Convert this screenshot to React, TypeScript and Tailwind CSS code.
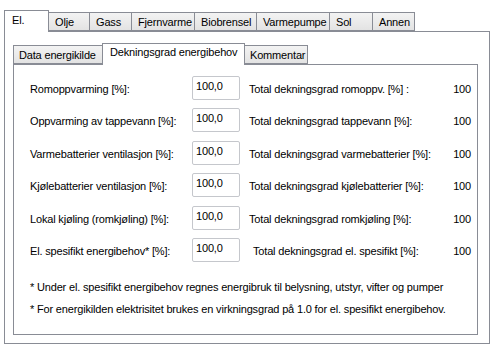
import React from 'react';

const outerTabs = ['El.', 'Olje', 'Gass', 'Fjernvarme', 'Biobrensel', 'Varmepumpe', 'Sol', 'Annen'];
const outerWidths = [45, 41, 42, 63, 62, 73, 43, 42];

const rows = [
  { label: 'Romoppvarming [%]:', total: 'Total dekningsgrad romoppv. [%] :', indent: false },
  { label: 'Oppvarming av tappevann [%]:', total: 'Total dekningsgrad tappevann [%]:', indent: false },
  { label: 'Varmebatterier ventilasjon [%]:', total: 'Total dekningsgrad varmebatterier [%]:', indent: false },
  { label: 'Kjølebatterier ventilasjon [%]:', total: 'Total dekningsgrad kjølebatterier [%]:', indent: false },
  { label: 'Lokal kjøling (romkjøling) [%]:', total: 'Total dekningsgrad romkjøling [%]:', indent: false },
  { label: 'El. spesifikt energibehov* [%]:', total: 'Total dekningsgrad el. spesifikt [%]:', indent: true },
];

export default function App() {
  return (
    <div
      className="w-[497px] h-[352px] bg-white text-black text-[11px] leading-[13px] tracking-[-0.17px]"
      style={{ fontFamily: '"Liberation Sans", Arial, sans-serif' }}
    >
      {/* outer tab strip */}
      <div className="flex items-end pl-[4px] pt-[9px] h-[31px]">
        {outerTabs.map((t, i) =>
          i === 0 ? (
            <div
              key={t}
              className="relative z-10 h-[22px] -mb-px border border-b-0 border-[#898c95] bg-white pl-[7px] pt-[3px]"
              style={{ width: outerWidths[i] }}
            >
              {t}
            </div>
          ) : (
            <div
              key={t}
              className="h-[19px] border border-[#898c95] border-l-0 bg-gradient-to-b from-[#f3f3f3] to-[#e3e3e3] pl-[6px] pt-[3px]"
              style={{ width: outerWidths[i] }}
            >
              {t}
            </div>
          )
        )}
      </div>

      {/* outer panel */}
      <div className="ml-[4px] w-[486px] h-[313px] border border-[#898c95] bg-white pl-[8px] pt-[10px]">
        {/* inner tabs */}
        <div className="flex items-end h-[22px]">
          <div className="h-[19px] w-[89px] border border-[#898c95] border-r-0 bg-gradient-to-b from-[#f3f3f3] to-[#e3e3e3] pl-[5px] pt-[3px]">
            Data energikilde
          </div>
          <div className="relative z-10 h-[22px] w-[143px] -mb-px border border-b-0 border-[#898c95] bg-white pl-[7px] pt-[2px]">
            Dekningsgrad energibehov
          </div>
          <div className="h-[19px] w-[63px] border border-[#898c95] border-l-0 bg-gradient-to-b from-[#f3f3f3] to-[#e3e3e3] pl-[5px] pt-[3px]">
            Kommentar
          </div>
        </div>

        {/* inner panel */}
        <div className="w-[465px] h-[271px] border border-[#898c95] bg-white pl-[16px] pr-[6px] pt-[11px]">
          <div className="flex flex-col gap-[9px]">
            {rows.map((r) => (
              <div key={r.label} className="flex items-center h-[23.5px]">
                <div className="w-[162px] pt-[3px]">{r.label}</div>
                <div className="w-[48px] h-[24px] border border-[#c5c7cc] rounded-[2px] pl-[3px] pt-[3px]">
                  100,0
                </div>
                <div className={`flex-1 pt-[3px] ${r.indent ? 'pl-[13px]' : 'pl-[9px]'}`}>{r.total}</div>
                <div className="pt-[3px] text-right">100</div>
              </div>
            ))}
          </div>
          <div className="mt-[19px]">* Under el. spesifikt energibehov regnes energibruk til belysning, utstyr, vifter og pumper</div>
          <div className="mt-[9px]">* For energikilden elektrisitet brukes en virkningsgrad på 1.0 for el. spesifikt energibehov.</div>
        </div>
      </div>
    </div>
  );
}
